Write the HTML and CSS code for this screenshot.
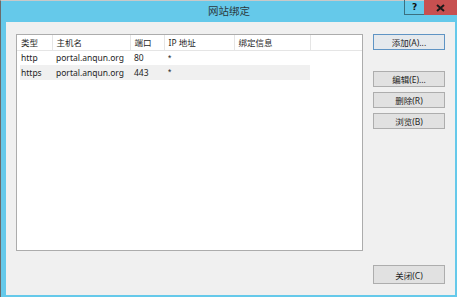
FILE: index.html
```html
<!DOCTYPE html>
<html>
<head>
    <meta charset="utf-8">
    <link rel="stylesheet" href="styles.css">
</head>
<body>

<div class="window">
    <div class="titlebar">
        <span class="title">网站绑定</span>
        <span class="controls">
            <span class="help">?</span>
            <span class="close">
                <svg width="9" height="8" viewBox="0 0 9 8"><path d="M1 1 L8 7 M8 1 L1 7" stroke="#1a1a1a" stroke-width="2"/></svg>
            </span>
        </span>
    </div>

    <div class="client">
        <div class="main">
            <div class="listbox">
                <table class="bindings">
                    <tr>
                        <th class="c-type">类型</th>
                        <th class="c-host">主机名</th>
                        <th class="c-port">端口</th>
                        <th class="c-ip">IP 地址</th>
                        <th class="c-info">绑定信息</th>
                        <th class="c-rest"></th>
                    </tr>
                    <tr>
                        <td>http</td>
                        <td>portal.anqun.org</td>
                        <td>80</td>
                        <td class="star">*</td>
                        <td></td>
                        <td class="blank"></td>
                    </tr>
                    <tr class="selected">
                        <td>https</td>
                        <td>portal.anqun.org</td>
                        <td>443</td>
                        <td class="star">*</td>
                        <td></td>
                        <td class="blank"></td>
                    </tr>
                </table>
            </div>
            <div class="actions">
                <button class="btn default">添加(A)...</button>
                <button class="btn edit">编辑(E)...</button>
                <button class="btn">删除(R)</button>
                <button class="btn">浏览(B)</button>
            </div>
        </div>
        <div class="footer">
            <button class="btn close-btn">关闭(C)</button>
        </div>
    </div>
</div>

</body>
</html>
```

FILE: styles.css
```css
* {
    box-sizing: border-box;
}

body {
    margin: 0;
    font-family: "Noto Sans", "Noto Sans CJK SC", sans-serif;
    font-size: 8.5px;
    color: #1e1e1e;
}

.window {
    width: 457px;
    height: 297px;
    background-color: #65c9ea;
    border-left: 1px solid #6b6b6b;
    border-top: 1px solid #c9c9c9;
    display: flex;
    flex-direction: column;
}

.titlebar {
    height: 21px;
    display: flex;
    justify-content: center;
    position: relative;
}
.title {
    font-size: 10.5px;
    color: #2b3a40;
    line-height: 20px;
}
.controls {
    position: absolute;
    top: -1px;
    right: 0;
    display: flex;
}
.help {
    width: 20px;
    height: 15px;
    border-left: 1px solid #3b6f80;
    border-bottom: 1px solid #3b6f80;
    font-family: "DejaVu Sans", sans-serif;
    font-weight: bold;
    font-size: 9px;
    color: #111;
    text-align: center;
    line-height: 14px;
}
.close {
    width: 33px;
    height: 15px;
    background-color: #c75050;
    display: flex;
    align-items: center;
    justify-content: center;
}

.client {
    flex: 1;
    margin: 0 2px 2px 5px;
    background-color: #f0f0f0;
    padding: 12px 10px 11px 10px;
    display: flex;
    flex-direction: column;
}

.main {
    height: 217px;
    display: flex;
    gap: 10px;
}
.listbox {
    width: 347px;
    background-color: #fff;
    border: 1px solid #acacac;
}
.bindings {
    border-collapse: collapse;
    width: 100%;
}
.bindings th {
    font-weight: normal;
    text-align: left;
    height: 15px;
    padding: 0 0 0 4px;
    border-right: 1px solid #e5e5e5;
    border-bottom: 1px solid #e5e5e5;
}
.bindings th.c-rest {
    border-right: none;
}
.bindings td {
    height: 15px;
    padding: 0 0 0 4px;
    white-space: nowrap;
}
.bindings td.star {
    font-family: "Liberation Sans", sans-serif;
    color: #1e1e1e;
    vertical-align: top;
    padding-top: 2px;
}
.c-type { width: 35px; }
.c-host { width: 78px; }
.c-port { width: 34px; }
.c-ip { width: 70px; }
.c-info { width: 76px; }
.selected td {
    background-color: #f0f0f0;
}
.selected td:first-child {
    box-shadow: inset 3px 0 #fff;
}
.selected td.blank {
    background-color: #fff;
}

.actions {
    width: 72px;
    display: flex;
    flex-direction: column;
    gap: 5px;
}
.btn {
    font-family: "Noto Sans", "Noto Sans CJK SC", sans-serif;
    font-size: 8.5px;
    color: #1e1e1e;
    width: 72px;
    height: 16px;
    padding: 0;
    background-color: #e1e1e1;
    border: 1px solid #adadad;
}
.btn.default {
    border-color: #5f94c4;
    background-color: #e5e9ed;
}
.btn.edit {
    margin-top: 16px;
}

.footer {
    margin-top: 14px;
    display: flex;
    justify-content: flex-end;
}
.close-btn {
    height: 19px;
}
```
